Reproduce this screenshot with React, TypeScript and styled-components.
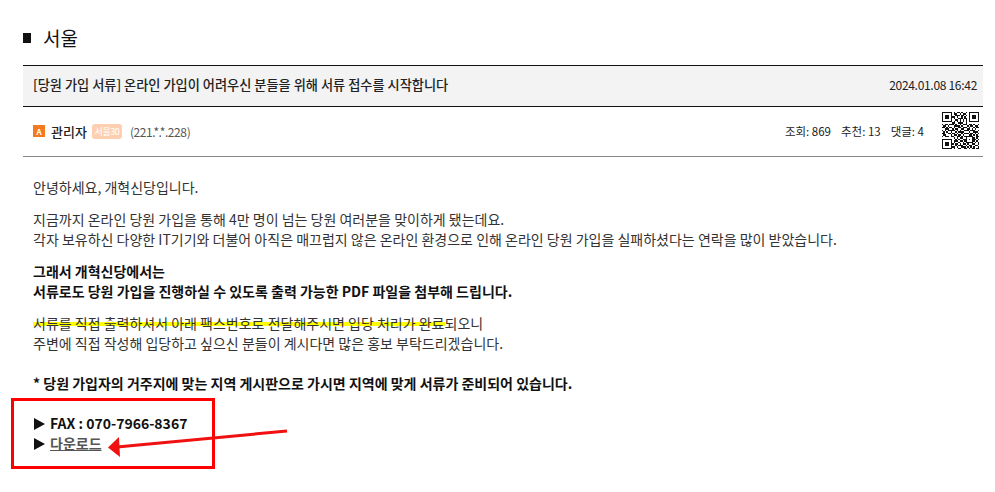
import styled, { createGlobalStyle } from "styled-components";

const GlobalStyle = createGlobalStyle`
  html, body {
    margin: 0;
    padding: 0;
    background: #fff;
    font-family: "Noto Sans CJK KR", "Noto Sans", sans-serif;
    color: #222;
  }
`;

// rough qr pattern, rows of 25 cells
const qrRows = [
  "1111111010110100101111111",
  "1000001011001011001000001",
  "1011101001110110101011101",
  "1011101110100101001011101",
  "1011101010011101101011101",
  "1000001001101010101000001",
  "1111111010101010101111111",
  "0000000110011100100000000",
  "1011011101001011101101001",
  "0110100011110100010110110",
  "1101011010011011101001011",
  "0011100101100110011010100",
  "1010111110101001110111001",
  "0101001001011110001001110",
  "1100110110100101110110101",
  "0110001011011010001101010",
  "1011101100110101111110011",
  "0000000010101100100011010",
  "1111111001010011101011101",
  "1000001011101101100011010",
  "1011101010010010111110101",
  "1011101101101011010011001",
  "1011101001011100101100110",
  "1000001110100111010101001",
  "1111111010011001101011011",
];

const QrCode = () => (
  <QrSvg viewBox="0 0 25 25" shapeRendering="crispEdges">
    {qrRows.map((row, y) =>
      row.split("").map((c, x) =>
        c === "1" ? <rect key={`${x}-${y}`} x={x} y={y} width="1" height="1" fill="#111" /> : null
      )
    )}
  </QrSvg>
);

export default function App() {
  return (
    <Page>
      <GlobalStyle />
      <Heading>
        <Bullet />
        <span>서울</span>
      </Heading>
      <TitleBar>
        <PostTitle>[당원 가입 서류] 온라인 가입이 어려우신 분들을 위해 서류 접수를 시작합니다</PostTitle>
        <PostDate>2024.01.08 16:42</PostDate>
      </TitleBar>
      <MetaBar>
        <Author>
          <LevelIcon>A</LevelIcon>
          <AuthorName>관리자</AuthorName>
          <Badge>서울30</Badge>
          <Ip>(221.*.*.228)</Ip>
        </Author>
        <Stats>
          <span>조회: 869</span>
          <span>추천: 13</span>
          <span>댓글: 4</span>
          <QrCode />
        </Stats>
      </MetaBar>
      <Body>
        <Para>안녕하세요, 개혁신당입니다.</Para>
        <Para>
          지금까지 온라인 당원 가입을 통해 4만 명이 넘는 당원 여러분을 맞이하게 됐는데요.
          <br />
          각자 보유하신 다양한 IT기기와 더불어 아직은 매끄럽지 않은 온라인 환경으로 인해 온라인 당원 가입을 실패하셨다는 연락을 많이 받았습니다.
        </Para>
        <Para $bold>
          그래서 개혁신당에서는
          <br />
          서류로도 당원 가입을 진행하실 수 있도록 출력 가능한 PDF 파일을 첨부해 드립니다.
        </Para>
        <Para>
          <Marked>서류를 직접 출력하셔서 아래 팩스번호로 전달해주시면 입당 처리가 완료</Marked>되오니
          <br />
          주변에 직접 작성해 입당하고 싶으신 분들이 계시다면 많은 홍보 부탁드리겠습니다.
        </Para>
        <Notice>* 당원 가입자의 거주지에 맞는 지역 게시판으로 가시면 지역에 맞게 서류가 준비되어 있습니다.</Notice>
        <Links>
          <Pointer />
          FAX : 070-7966-8367
          <br />
          <Pointer />
          <DownloadLink href="#">다운로드</DownloadLink>
        </Links>
      </Body>
      <RedBox />
      <Arrow viewBox="0 0 190 30">
        <path d="M180 2 L10 18" stroke="#f01010" strokeWidth="3" fill="none" />
        <path d="M1 18.5 L12 8 L13 28 Z" fill="#f01010" />
      </Arrow>
    </Page>
  );
}

const Page = styled.div`
  position: relative;
  width: 995px;
  height: 492px;
  box-sizing: border-box;
  padding: 0 12px 0 23px;
  overflow: hidden;
`;

const Heading = styled.h2`
  display: flex;
  align-items: center;
  gap: 12px;
  height: 65px;
  margin: 0;
  padding-top: 9px;
  box-sizing: border-box;
  font-size: 19px;
  font-weight: 400;
  color: #111;
`;

const Bullet = styled.i`
  display: block;
  width: 8px;
  height: 10px;
  margin-top: 2px;
  background: #111;
`;

const TitleBar = styled.div`
  display: flex;
  align-items: center;
  justify-content: space-between;
  height: 42px;
  box-sizing: border-box;
  padding: 0 6px 3px 10px;
  background: #f3f3f3;
  border-top: 1px solid #111;
  border-bottom: 1px solid #111;
`;

const PostTitle = styled.div`
  font-size: 13.2px;
  font-weight: 500;
  color: #222;
`;

const PostDate = styled.div`
  font-size: 12px;
  letter-spacing: -0.3px;
  color: #222;
`;

const MetaBar = styled.div`
  display: flex;
  align-items: center;
  justify-content: space-between;
  height: 50px;
  box-sizing: border-box;
  padding: 0 4px 1px 10px;
  border-bottom: 1px solid #888;
`;

const Author = styled.div`
  display: flex;
  align-items: center;
`;

const LevelIcon = styled.span`
  display: flex;
  align-items: center;
  justify-content: center;
  width: 12px;
  height: 12px;
  margin-right: 6px;
  background: #f47a20;
  color: #fff;
  font-size: 8px;
  font-weight: 700;
`;

const AuthorName = styled.span`
  font-size: 13px;
  font-weight: 500;
  color: #222;
  margin-right: 5px;
`;

const Badge = styled.span`
  display: flex;
  align-items: center;
  justify-content: center;
  width: 30px;
  height: 15px;
  margin-right: 8px;
  border-radius: 3px;
  background: #fdcfb0;
  color: #fff;
  font-size: 9px;
  letter-spacing: -0.5px;
`;

const Ip = styled.span`
  font-size: 12px;
  letter-spacing: -0.4px;
  color: #555;
`;

const Stats = styled.div`
  display: flex;
  align-items: center;
  gap: 10px;
  font-size: 11.5px;
  color: #222;
`;

const QrSvg = styled.svg`
  display: block;
  width: 37px;
  height: 37px;
  margin: 0 0 2px 8px;
`;

const Body = styled.div`
  padding: 20px 10px 0;
  font-size: 14px;
  line-height: 20px;
  color: #333;
`;

const Para = styled.p<{ $bold?: boolean }>`
  margin: 0 0 12px;
  font-weight: ${(p) => (p.$bold ? 700 : 400)};
  color: ${(p) => (p.$bold ? "#111" : "#333")};
`;

const Marked = styled.span`
  background: linear-gradient(transparent 9px, #ffff00 9px, #ffff00 13px, transparent 13px);
`;

const Notice = styled.p`
  margin: 20px 0 0;
  font-weight: 700;
  color: #111;
`;

const Links = styled.div`
  margin-top: 20px;
  font-size: 14px;
  font-weight: 700;
  color: #111;
`;

// drawn triangle, the font glyph came out too small
const Pointer = styled.i`
  display: inline-block;
  width: 0;
  height: 0;
  margin: 0 5px -1px 1px;
  border-left: 11px solid #111;
  border-top: 6px solid transparent;
  border-bottom: 6px solid transparent;
`;

const DownloadLink = styled.a`
  color: #555;
  text-decoration: underline;
`;

const RedBox = styled.div`
  position: absolute;
  left: 11px;
  top: 398px;
  width: 204px;
  height: 71px;
  box-sizing: border-box;
  border: 3px solid #f00;
`;

const Arrow = styled.svg`
  position: absolute;
  left: 107px;
  top: 429px;
  width: 190px;
  height: 30px;
`;
